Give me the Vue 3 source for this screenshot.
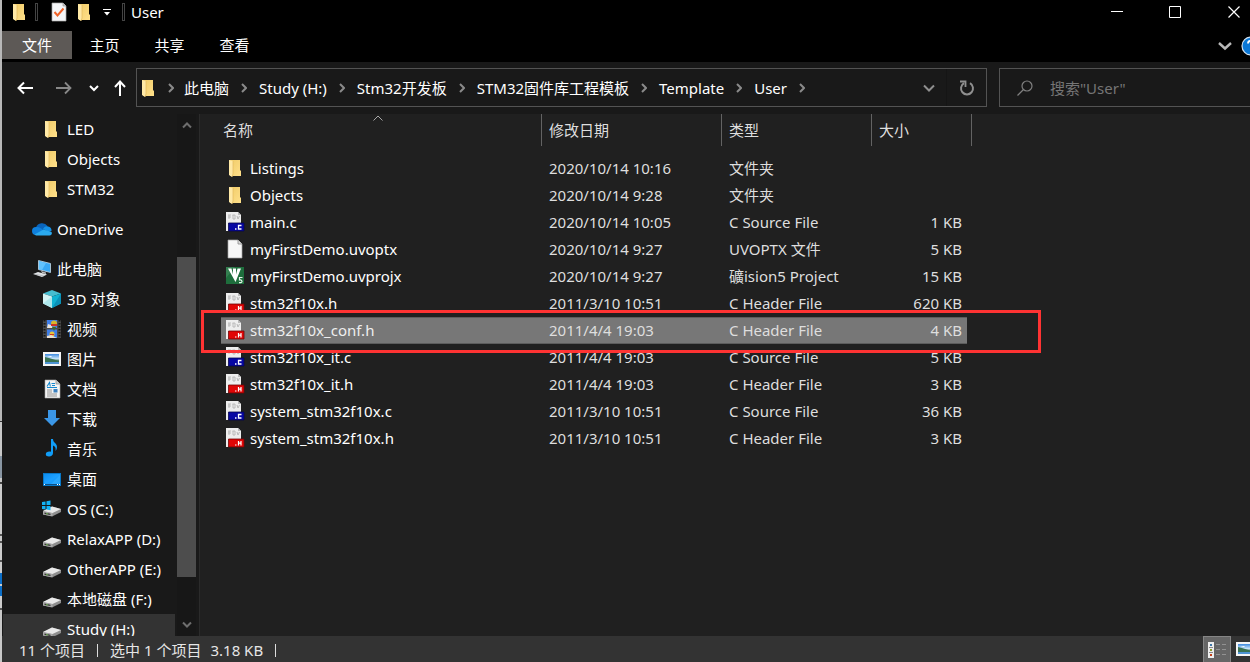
<script setup>
const tabs = ['主页', '共享', '查看']
const crumbs = ['此电脑', 'Study (H:)', 'Stm32开发板', 'STM32固件库工程模板', 'Template', 'User']

const groups = [
  { items: [
    { label: 'LED', icon: 'folder' },
    { label: 'Objects', icon: 'folder' },
    { label: 'STM32', icon: 'folder' },
  ] },
  { items: [{ label: 'OneDrive', icon: 'onedrive', root: true }] },
  { items: [
    { label: '此电脑', icon: 'pc', root: true },
    { label: '3D 对象', icon: 'cube' },
    { label: '视频', icon: 'video' },
    { label: '图片', icon: 'picture' },
    { label: '文档', icon: 'document' },
    { label: '下载', icon: 'download' },
    { label: '音乐', icon: 'music' },
    { label: '桌面', icon: 'desktop' },
    { label: 'OS (C:)', icon: 'osdrive' },
    { label: 'RelaxAPP (D:)', icon: 'drive' },
    { label: 'OtherAPP (E:)', icon: 'drive' },
    { label: '本地磁盘 (F:)', icon: 'drive' },
    { label: 'Study (H:)', icon: 'drive', current: true },
  ] },
]

const files = [
  { name: 'Listings', date: '2020/10/14 10:16', type: '文件夹', size: '', icon: 'folder' },
  { name: 'Objects', date: '2020/10/14 9:28', type: '文件夹', size: '', icon: 'folder' },
  { name: 'main.c', date: '2020/10/14 10:05', type: 'C Source File', size: '1 KB', icon: 'csource' },
  { name: 'myFirstDemo.uvoptx', date: '2020/10/14 9:27', type: 'UVOPTX 文件', size: '5 KB', icon: 'blank' },
  { name: 'myFirstDemo.uvprojx', date: '2020/10/14 9:27', type: '礦ision5 Project', size: '15 KB', icon: 'keil' },
  { name: 'stm32f10x.h', date: '2011/3/10 10:51', type: 'C Header File', size: '620 KB', icon: 'cheader' },
  { name: 'stm32f10x_conf.h', date: '2011/4/4 19:03', type: 'C Header File', size: '4 KB', icon: 'cheader', selected: true },
  { name: 'stm32f10x_it.c', date: '2011/4/4 19:03', type: 'C Source File', size: '5 KB', icon: 'csource' },
  { name: 'stm32f10x_it.h', date: '2011/4/4 19:03', type: 'C Header File', size: '3 KB', icon: 'cheader' },
  { name: 'system_stm32f10x.c', date: '2011/3/10 10:51', type: 'C Source File', size: '36 KB', icon: 'csource' },
  { name: 'system_stm32f10x.h', date: '2011/3/10 10:51', type: 'C Header File', size: '3 KB', icon: 'cheader' },
]
</script>

<template>
  <div class="window">
    <svg class="defs" width="0" height="0" aria-hidden="true">
      <defs>
        <linearGradient id="g-folder" x1="0" y1="0" x2="1" y2="1">
          <stop offset="0" stop-color="#f0cb68" /><stop offset="1" stop-color="#ffe08a" />
        </linearGradient>
        <linearGradient id="g-desk" x1="0" y1="0" x2="1" y2="1">
          <stop offset="0" stop-color="#0d8df0" /><stop offset="0.5" stop-color="#1da0ff" /><stop offset="1" stop-color="#0a93f5" />
        </linearGradient>
        <linearGradient id="g-sky" x1="0" y1="0" x2="0" y2="1">
          <stop offset="0" stop-color="#3f8be0" /><stop offset="0.5" stop-color="#d4ecfb" />
          <stop offset="0.6" stop-color="#5d8a78" /><stop offset="1" stop-color="#3a78b4" />
        </linearGradient>
      </defs>
      <symbol id="i-folder" viewBox="0 0 20 20">
        <path d="M4 2h11v10l1 1v5H5z" fill="url(#g-folder)" />
        <path d="M4 2l4 1v13l-1 3-3-2z" fill="#ffe9a6" />
        <path d="M8 3v13l-1 3" fill="none" stroke="#e3b95b" stroke-width="0.7" />
      </symbol>
      <symbol id="i-onedrive" viewBox="0 0 20 20">
        <path d="M4 8.500a6.500 6.500 0 0 1 11.500-1.500l-4 4z" fill="#0a64bb" />
        <path d="M4 16a4 4 0 0 1 0-8c1.500-.3 3 .1 4 .8l7 4.200-6 3z" fill="#0f7fdc" />
        <path d="M11 10c1-2 3-3.500 5-2.500a4.200 4.200 0 0 1 3.500 4.500l-3 1z" fill="#1590e6" />
        <path d="M2.500 15.500l9-5 8 2.500c1 1.600 0 3.500-2 3.500H4z" fill="#2aa9ee" />
      </symbol>
      <symbol id="i-pc" viewBox="0 0 20 20">
        <path d="M6.500 1.500l12 3v9l-12-3z" fill="#39a9f6" stroke="#c8dbe8" stroke-width="0.8" />
        <path d="M7 2l7 2-4 7-3-.8z" fill="#61c3ff" />
        <path d="M9 12l5 1.500v1.500l-4-1z" fill="#bbb" />
        <path d="M1 15l5-2 9 2.500-5 2.500z" fill="#e1e4e6" /><path d="M3 15.200l9 1.800" stroke="#9aa0a4" stroke-width="0.6" />
      </symbol>
      <symbol id="i-cube" viewBox="0 0 20 20">
        <path d="M11 1l9 3.500-9 3-9-3z" fill="#45bdd0" />
        <path d="M2 4.500l9 3V19l-9-4.500z" fill="#d4f4f5" />
        <path d="M11 7.500l9-3v10L11 19z" fill="#0fb2d2" /><path d="M11 19l9-14.500v10z" fill="#0a91b8" />
        <path d="M2 14.500L11 7.500V19z" fill="#aee8ec" />
      </symbol>
      <symbol id="i-video" viewBox="0 0 20 20">
        <path d="M2 1h18v18H2z" fill="#4a4a4a" />
        <path d="M6 1h10v8H6zM6 10.500h10V19H6z" fill="#3e7de8" />
        <path d="M3.500 1v18M18.500 1v18" stroke="#161616" stroke-width="2" stroke-dasharray="1.500 1.500" />
        <circle cx="13" cy="4.500" r="3" fill="#d8b72c" /><path d="M7 5l3 1 2 3H6z" fill="#e8e2d8" />
        <path d="M10 5h6v2h-6z" fill="#cf3428" /><path d="M11 8h4l-2 4z" fill="#37682c" />
        <circle cx="11" cy="15" r="2.500" fill="#e5c53a" /><path d="M6 17l4-1 6 3H6z" fill="#e9ded0" /><path d="M9 15h4v1H9z" fill="#cf3428" />
      </symbol>
      <symbol id="i-picture" viewBox="0 0 20 20">
        <path d="M2 3h18v14H2z" fill="#f5f5f5" /><path d="M4 5h14v10H4z" fill="url(#g-sky)" />
        <path d="M4 8l4 1 10 3v1H4z" fill="#397253" /><path d="M4 13h14v2H4z" fill="#4e94d4" /><path d="M6 7h5l-1 1z" fill="#fff" />
      </symbol>
      <symbol id="i-document" viewBox="0 0 20 20">
        <path d="M4 1h11l4 4v14H4z" fill="#f4f4f4" stroke="#aaa" stroke-width="0.6" /><path d="M15 1v4h4" fill="#ccc" stroke="#888" stroke-width="0.7" />
        <path d="M6 7.500l2.500-4 .8 4M10.500 4.500H14M11 6.500h3M6 8.500h10" fill="none" stroke="#1689cf" stroke-width="1.100" />
        <path d="M6 11h5M6 13h5M6 15h10M6 17h10" stroke="#888" stroke-width="0.9" /><path d="M12.500 10h4v3.500h-4z" fill="#3b80bf" />
      </symbol>
      <symbol id="i-download" viewBox="0 0 20 20">
        <path d="M7 1h8v8h4l-8 8-8-8h4z" fill="#3b97e8" />
      </symbol>
      <symbol id="i-music" viewBox="0 0 20 20">
        <path d="M10 0h2c0 4 4 4 4 8 0 2-.8 3-1.500 4 .7-3-.5-5-2.500-5.500V14c0 2-1.600 3.500-4 3.500-2 0-3.200-1-3.200-2.300 0-1.900 2.200-3.200 5.200-2.500z" fill="#109df8" />
      </symbol>
      <symbol id="i-desktop" viewBox="0 0 20 20">
        <path d="M2 4h18v13H2z" fill="#0878c8" /><path d="M3 5h16v10H3z" fill="url(#g-desk)" />
        <path d="M10 15L19 6v9z" fill="#38b0ff" opacity="0.6" /><path d="M3 15.500h16" stroke="#0a4f85" /><path d="M3 15.500h1M16 15.500h1M18 15.500h1" stroke="#fff" />
      </symbol>
      <symbol id="i-drive" viewBox="0 0 20 20">
        <path d="M2 13l9-4.500 9 2.500v3l-9 4.500-9-2z" fill="#8f8f8f" />
        <path d="M2 13l9-4.500 9 2.500-8.500 4z" fill="#e9e9e9" /><path d="M2 13.200l9.500 2v3L2 16.500z" fill="#aaa" />
        <path d="M3.500 14.500l6 1.300v1.200l-6-1z" fill="#343434" /><circle cx="6" cy="15.800" r="0.7" fill="#7ddc56" />
      </symbol>
      <symbol id="i-osdrive" viewBox="0 0 20 20">
        <path d="M2 12l9-4.500 9 2.500v3l-9 4.500-9-2z" fill="#8f8f8f" />
        <path d="M2 12l9-4.500 9 2.500-8.500 4z" fill="#e9e9e9" /><path d="M2 12.200l9.500 2v3L2 15.500z" fill="#aaa" />
        <path d="M3.500 13.500l6 1.300V16l-6-1z" fill="#343434" /><circle cx="6" cy="14.800" r="0.7" fill="#7ddc56" />
        <path d="M1 3l3.500-.6V6H1zM5.500 2.200L9.500 1.500V6h-4zM1 7h3.500v3.500L1 10zM5.500 7h4v4.300l-4-.7z" fill="#12b2f5" />
      </symbol>
      <symbol id="i-blank" viewBox="0 0 20 20">
        <path d="M3 1h10l4 4v14H3z" fill="#f7f7f7" stroke="#a5a5a5" stroke-width="0.7" /><path d="M13 1v4h4" fill="#ddd" stroke="#888" stroke-width="0.8" />
      </symbol>
      <symbol id="i-csource" viewBox="0 0 20 20">
        <path d="M1 0h12l3 3v16H1z" fill="#eee" /><path d="M13 0v3h3" fill="#bbb" />
        <path d="M3 3h3M3 5h3M4 3v4M8 3v4h2V3H7.500M12 4l1 3 1.500-3" fill="none" stroke="#b4b4b4" stroke-width="0.9" />
        <path d="M3.500 11H19v8H3.500z" fill="#0707a3" stroke="#05054f" stroke-width="0.8" />
        <path d="M10 17h1.500M16.500 13.500h-3v3.500h3" fill="none" stroke="#fff" stroke-width="1.300" />
      </symbol>
      <symbol id="i-cheader" viewBox="0 0 20 20">
        <path d="M1 0h12l3 3v16H1z" fill="#eee" /><path d="M13 0v3h3" fill="#bbb" />
        <path d="M3 3h3M3 5h3M4 3v4M8 3v4h2V3H7.500M12 4l1 3 1.500-3" fill="none" stroke="#b4b4b4" stroke-width="0.9" />
        <path d="M3.500 11H19v8H3.500z" fill="#e10606" stroke="#6f0505" stroke-width="0.8" />
        <path d="M10 17h1.500M13.500 13v4.500M16 13v4.500M13.500 15.200H16" fill="none" stroke="#fff" stroke-width="1.200" />
      </symbol>
      <symbol id="i-keil" viewBox="0 0 20 20">
        <path d="M1 1h18v17H1z" fill="#1e6e3c" /><path d="M1 1h9L1 12z" fill="#347f50" />
        <path d="M3 2.500h3.500l1.500 6V2.500h3v6l1.500-6H16L10.500 16z" fill="#fff" />
        <path d="M17.500 11.500H14.500V14c3-.6 3 2.500 1.500 2.600h-2" fill="none" stroke="#e8f5ec" stroke-width="1.200" />
      </symbol>
      <symbol id="i-check" viewBox="0 0 20 20">
        <path d="M3 1h11l3 3v15H3z" fill="#f5f6f8" stroke="#aaa" stroke-width="0.7" /><path d="M14 1v3h3" fill="#ccc" stroke="#888" stroke-width="0.6" />
        <path d="M5.500 10l3 3.500 6-7" fill="none" stroke="#f0642a" stroke-width="2" />
      </symbol>
    </svg>

    <div class="edge"></div>

    <div class="frame">
      <header class="titlebar">
        <svg class="icon"><use href="#i-folder" /></svg>
        <i class="pipe"></i>
        <button class="plain" aria-label="属性"><svg class="icon"><use href="#i-check" /></svg></button>
        <button class="plain" aria-label="新建文件夹"><svg class="icon"><use href="#i-folder" /></svg></button>
        <button class="plain more" aria-label="自定义快速访问工具栏">
          <svg width="8" height="8" viewBox="0 0 8 8"><path d="M0 1.500h8" stroke="#fff" /><path d="M1 4h6L4 7.500z" fill="#fff" /></svg>
        </button>
        <i class="pipe"></i>
        <span class="title">User</span>
        <div class="controls">
          <button class="plain" aria-label="最小化"><svg width="12" height="12"><path d="M0 5.500h12" stroke="#fff" /></svg></button>
          <button class="plain" aria-label="最大化"><svg width="12" height="12"><path d="M.5.5h11v11H.5z" fill="none" stroke="#fff" /></svg></button>
          <button class="plain" aria-label="关闭"><svg width="12" height="12"><path d="M.5.5l11 11M11.500.5l-11 11" stroke="#fff" stroke-width="1.200" /></svg></button>
        </div>
      </header>

      <nav class="ribbon">
        <button class="tab file">文件</button>
        <button v-for="t in tabs" :key="t" class="tab">{{ t }}</button>
        <div class="ribbon-end">
          <button class="plain" aria-label="展开功能区"><svg width="14" height="10"><path d="M1 2l6 5.500L13 2" fill="none" stroke="#b8b8b8" stroke-width="2.400" /></svg></button>
          <button class="plain help" aria-label="帮助"><svg width="20" height="20"><circle cx="10" cy="10" r="9" fill="#0b78d7" stroke="#d4e4f2" stroke-width="1.200" /><path d="M7 7.500C7 4 13 4 13 7.500c0 2-3 2-3 4.500M10 14v2" fill="none" stroke="#fff" stroke-width="1.800" /></svg></button>
        </div>
      </nav>

      <div class="address-row">
        <div class="history">
          <button class="plain" aria-label="后退"><svg width="16" height="14"><path d="M16 7H1.500M7 1.500L1.500 7 7 12.500" fill="none" stroke="#fff" stroke-width="2" /></svg></button>
          <button class="plain" aria-label="前进"><svg width="16" height="14"><path d="M0 7h14.500M9 1.500L14.500 7 9 12.500" fill="none" stroke="#888" stroke-width="1.800" /></svg></button>
          <button class="plain" aria-label="最近浏览的位置"><svg width="10" height="8"><path d="M1 2l4 4 4-4" fill="none" stroke="#fff" stroke-width="2" /></svg></button>
          <button class="plain" aria-label="上移"><svg width="12" height="16"><path d="M6 16V2M1 7l5-5.500L11 7" fill="none" stroke="#fff" stroke-width="2" /></svg></button>
        </div>
        <div class="address">
          <svg class="icon"><use href="#i-folder" /></svg>
          <svg class="chev first" viewBox="0 0 6 10"><path d="M1 1l4 4-4 4" /></svg>
          <template v-for="c in crumbs" :key="c">
            <a class="crumb" href="#">{{ c }}</a>
            <svg class="chev" viewBox="0 0 6 10"><path d="M1 1l4 4-4 4" /></svg>
          </template>
          <button class="plain drop" aria-label="以前的位置"><svg width="12" height="8"><path d="M1 1.500L6 6.500l5-5" fill="none" stroke="#8f8f8f" stroke-width="2" /></svg></button>
          <button class="plain refresh" aria-label="刷新"><svg width="16" height="16"><path d="M11 3.200A6 6 0 1 1 5 3.200" fill="none" stroke="#8f8f8f" stroke-width="2" /><path d="M1 1.500h5.500V7" fill="none" stroke="#8f8f8f" stroke-width="1.800" /></svg></button>
        </div>
        <label class="search">
          <svg width="16" height="16"><circle cx="10" cy="6" r="5" fill="none" stroke="#808080" stroke-width="1.200" /><path d="M6.500 9.500L.5 15.500" stroke="#808080" stroke-width="1.300" /></svg>
          <input type="text" placeholder="搜索&quot;User&quot;" aria-label="搜索" />
        </label>
      </div>

      <div class="body">
        <aside class="sidebar">
          <div class="tree">
            <ul v-for="(g, gi) in groups" :key="gi">
              <li v-for="n in g.items" :key="n.label">
                <a href="#" :class="['node', { root: n.root, current: n.current }]">
                  <svg class="icon"><use :href="'#i-' + n.icon" /></svg>{{ n.label }}
                </a>
              </li>
            </ul>
          </div>
          <div class="scrollbar">
            <svg width="10" height="8"><path d="M1 6.500l4-4 4 4" fill="none" stroke="#6e6e6e" stroke-width="2" /></svg>
            <div class="track"><div class="thumb"></div></div>
            <svg width="10" height="8"><path d="M1 1.500l4 4 4-4" fill="none" stroke="#6e6e6e" stroke-width="2" /></svg>
          </div>
        </aside>

        <main class="files">
          <table>
            <colgroup><col class="c-name" /><col class="c-date" /><col class="c-type" /><col class="c-size" /></colgroup>
            <thead>
              <tr>
                <th>名称<svg class="sort" width="10" height="6"><path d="M.5 5.500L5 1l4.500 4.500" fill="none" stroke="#a8a8a8" /></svg></th>
                <th>修改日期</th><th>类型</th><th>大小</th>
              </tr>
            </thead>
            <tbody>
              <tr v-for="f in files" :key="f.name" :class="{ selected: f.selected }">
                <td><span class="name"><svg class="icon"><use :href="'#i-' + f.icon" /></svg>{{ f.name }}</span><span v-if="f.selected" class="marker"></span></td>
                <td>{{ f.date }}</td>
                <td>{{ f.type }}</td>
                <td>{{ f.size }}</td>
              </tr>
            </tbody>
          </table>
        </main>
      </div>

      <footer class="status">
        <span>11 个项目</span><i></i><span class="sel">选中 1 个项目</span><span>3.18 KB</span><i></i>
        <div class="views">
          <button class="plain on" aria-label="详细信息">
            <svg width="18" height="16"><path d="M0 0h6v16H0z" fill="#eee" /><path d="M1 5.500h4M1 10.500h4" stroke="#888" /><path d="M2 2h2v2H2z" fill="#3f78a8" /><path d="M2 7h2v2H2z" fill="#8b9a2c" /><path d="M2 12h2v2H2z" fill="#c24018" /><path d="M8 2.500h4M14 2.500h4M8 7.500h4M14 7.500h4M8 12.500h4M14 12.500h4" stroke="#929292" /></svg>
          </button>
          <button class="plain thumbs" aria-label="大缩略图">
            <svg width="18" height="14" viewBox="2 3 18 14"><use href="#i-picture" width="20" height="20" /></svg>
          </button>
        </div>
      </footer>
    </div>
  </div>
</template>

<style>
html, body { background: #000; }
</style>

<style scoped>
* { box-sizing: border-box; }
.window {
  display: flex;
  height: 100vh;
  overflow: hidden;
  background: #000;
  color: #fff;
  font: 15px/20px "Noto Sans", "Noto Sans CJK SC", sans-serif;
}
.defs { position: absolute; }
.edge {
  flex: none;
  width: 2px;
  background: linear-gradient(#b8b8b8 0 421px, #333 421px 422px, #c8c8c8 422px 456px, #8996a3 456px 478px, #c8c8c8 478px 482px, #444 482px 484px, #ccc 484px 534px, #555 534px 536px, #ccc 536px 541px, #555 541px 543px, #ccc 543px 560px, #555 560px 562px, #ccc 562px 573px, #0b6ec8 573px 584px, #ccc 584px 586px, #0b6ec8 586px 596px, #ccc 596px 608px, #555 608px 610px, #c8c8c8 610px);
}
.frame { flex: 1; min-width: 0; display: flex; flex-direction: column; }
.icon { flex: none; width: 20px; height: 20px; display: block; }
.plain {
  border: 0; padding: 0; margin: 0; background: none; color: inherit;
  display: flex; align-items: center; justify-content: center; flex: none;
}
.plain svg { display: block; }

.titlebar { flex: none; display: flex; align-items: center; height: 31px; padding: 0 0 7px 7px; }
.titlebar .pipe { width: 3px; height: 18px; border: 1px solid #444; margin-left: 6px; }
.titlebar .pipe + .plain { margin-left: 11px; }
.titlebar .plain + .plain { margin-left: 5px; }
.titlebar .plain + .more { width: 8px; margin-left: 9px; }
.titlebar .pipe:nth-of-type(2) { margin-left: 11px; }
.titlebar .title { margin-left: 6px; }
.controls { display: flex; margin-left: auto; }
.controls .plain { width: 58px; height: 24px; }
.titlebar .controls .plain + .plain { margin-left: 0; }
.titlebar .controls .plain:last-child { width: 32px; margin-left: 14px; }

.ribbon { flex: none; display: flex; height: 31px; }
.tab { border: 0; padding: 0; width: 65px; height: 28px; background: none; color: #fff; font: inherit; }
.tab.file { width: 70px; background: #5d5956; }
.ribbon-end { display: flex; align-items: center; gap: 9px; margin-left: auto; margin-right: -11px; padding-bottom: 2px; }

.address-row { flex: none; display: flex; align-items: center; height: 52px; padding-bottom: 1px; background: #191919; }
.history { display: flex; align-items: center; width: 134px; padding-left: 15px; }
.history .plain:nth-child(2) { margin-left: 23px; }
.history .plain:nth-child(3) { margin-left: 17px; }
.history .plain:nth-child(4) { margin-left: 15px; }
.address { flex: 1; min-width: 0; display: flex; align-items: center; height: 39px; padding-left: 1px; border: 1px solid #535353; }
.crumb { color: #fff; text-decoration: none; white-space: nowrap; }
.chev { flex: none; width: 6px; height: 10px; margin: 0 12px; fill: none; stroke: #8a8a8a; stroke-width: 2; }
.chev.first { margin: 0 10px; }
.drop { margin-left: auto; width: 34px; height: 37px; }
.refresh { width: 40px; height: 37px; border-left: 1px solid #151515; }
.search { flex: none; display: flex; align-items: center; width: 251px; height: 39px; margin-left: 12px; padding-left: 17px; border: 1px solid #535353; border-right: 0; }
.search input { flex: 1; min-width: 0; margin-left: 17px; padding: 0; border: 0; outline: 0; background: none; color: #fff; font: inherit; }
.search input::placeholder { color: #757575; opacity: 1; }

.body { flex: 1; min-height: 0; display: flex; background: #202020; }
.sidebar { flex: none; display: flex; width: 198px; background: #191919; border-right: 1px solid #2b2b2b; }
.tree { flex: 1; min-width: 0; overflow: hidden; }
.tree ul { list-style: none; margin: 0; padding: 0; }
.tree ul + ul { margin-top: 10px; }
.node { display: flex; align-items: center; gap: 6px; height: 30px; margin-left: 1px; padding-left: 38px; color: #fff; text-decoration: none; white-space: nowrap; }
.node.root { padding-left: 29px; gap: 5px; }
.node.current { background: #333; }
.scrollbar { flex: none; display: flex; flex-direction: column; align-items: center; width: 19px; margin: 0 3px 0 2px; padding: 7px 0; background: #171717; }
.scrollbar svg { flex: none; }
.track { flex: 1; align-self: stretch; display: flex; flex-direction: column; }
.thumb { margin-top: auto; margin-bottom: 44px; height: 65%; background: #4d4d4d; }

.files { flex: 1; min-width: 0; padding-left: 21px; }
table { table-layout: fixed; width: 751px; border-collapse: separate; border-spacing: 0; }
.c-name { width: 321px; }
.c-date { width: 180px; }
.c-type { width: 150px; }
.c-size { width: 100px; }
th { position: relative; height: 32px; padding: 0 7px; text-align: left; font-weight: 400; color: #dedede; border-right: 1px solid #636363; }
th:first-child { padding-left: 2px; }
.sort { position: absolute; left: 152px; top: 1px; }
tbody::before { content: ""; display: block; height: 9px; }
tbody tr { position: relative; }
td { height: 27px; padding: 0 7px 2px; color: #dedede; white-space: nowrap; }
td:first-child { padding-left: 4px; color: #fff; }
td:last-child { padding-right: 5px; border-right: 5px solid transparent; background-clip: padding-box; text-align: right; }
.name { display: flex; align-items: center; gap: 5px; }
.selected td { background-color: #777; box-shadow: inset 0 1px #5c5c5c, inset 0 -1px #5c5c5c; }
.selected td:first-child { color: #eee; }
.marker { position: absolute; z-index: 1; left: -20px; right: -69px; top: -7px; bottom: -9px; border: 3px solid #ff3333; }

.status { flex: none; display: flex; align-items: center; height: 26px; padding: 2px 0 0 17px; background: #333; color: #e6e6e6; }
.status > i { width: 1px; height: 13px; margin: 0 12px; background: #ddd; }
.status .sel { margin-right: 9px; }
.views { display: flex; align-self: stretch; gap: 5px; margin: -2px -8px 0 auto; }
.views .on { width: 28px; background: #666; border: 1px solid #858585; border-bottom: 0; }
.views .thumbs { width: 18px; margin-right: 4px; }
</style>
